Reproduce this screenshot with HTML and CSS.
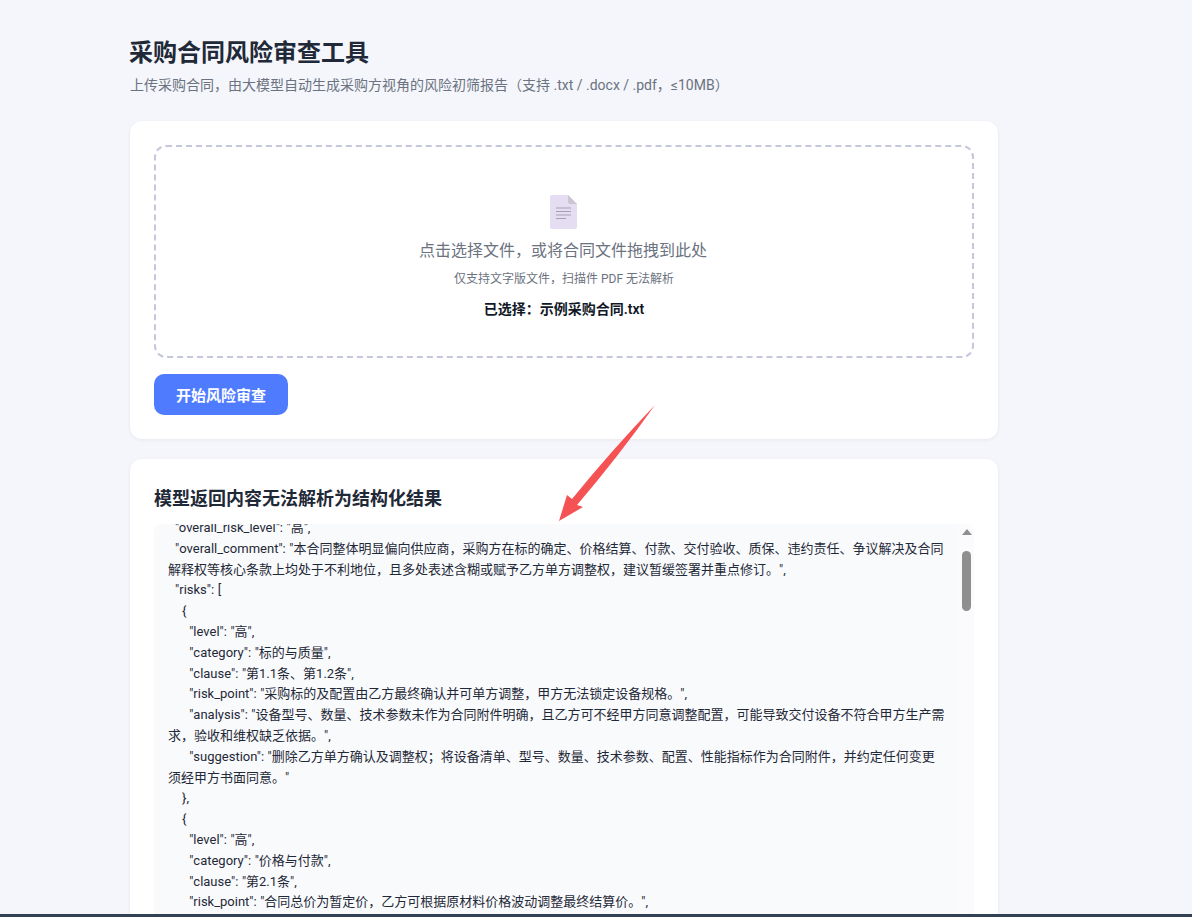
FILE: index.html
```html
<!DOCTYPE html>
<html lang="zh-CN">
  <head>
    <meta charset="UTF-8" />
    <title>采购合同风险审查工具</title>
    <link rel="stylesheet" href="styles.css">
  </head>
  <body>
    <div class="container">
      <h1>采购合同风险审查工具</h1>
      <p class="subtitle">上传采购合同，由大模型自动生成采购方视角的风险初筛报告（支持 .txt / .docx / .pdf，≤10MB）</p>

      <div class="card">
        <div class="dropzone">
          <svg class="file-icon" width="27" height="34" viewBox="0 0 27 34">
            <path d="M2 0H18L27 9V32a2 2 0 0 1-2 2H2a2 2 0 0 1-2-2V2a2 2 0 0 1 2-2z" fill="#e5def2" />
            <path d="M18 0L27 9H20a2 2 0 0 1-2-2z" fill="#c9c6d4" />
            <path d="M6 13H21M6 16.5H21M6 20H21M6 23.5H16" stroke="#a5a1b3" stroke-width="1" fill="none" />
          </svg>
          <p class="drop-title">点击选择文件，或将合同文件拖拽到此处</p>
          <p class="drop-note">仅支持文字版文件，扫描件 PDF 无法解析</p>
          <p class="drop-file">已选择：示例采购合同.txt</p>
        </div>
        <button class="start-btn">开始风险审查</button>
      </div>

      <div class="card result-card">
        <h2>模型返回内容无法解析为结构化结果</h2>
        <div class="raw-box">
          <pre class="raw-text">  "overall_risk_level": "高",
  "overall_comment": "本合同整体明显偏向供应商，采购方在标的确定、价格结算、付款、交付验收、质保、违约责任、争议解决及合同解释权等核心条款上均处于不利地位，且多处表述含糊或赋予乙方单方调整权，建议暂缓签署并重点修订。",
  "risks": [
    {
      "level": "高",
      "category": "标的与质量",
      "clause": "第1.1条、第1.2条",
      "risk_point": "采购标的及配置由乙方最终确认并可单方调整，甲方无法锁定设备规格。",
      "analysis": "设备型号、数量、技术参数未作为合同附件明确，且乙方可不经甲方同意调整配置，可能导致交付设备不符合甲方生产需求，验收和维权缺乏依据。",
      "suggestion": "删除乙方单方确认及调整权；将设备清单、型号、数量、技术参数、配置、性能指标作为合同附件，并约定任何变更须经甲方书面同意。"
    },
    {
      "level": "高",
      "category": "价格与付款",
      "clause": "第2.1条",
      "risk_point": "合同总价为暂定价，乙方可根据原材料价格波动调整最终结算价。",</pre>
          <div class="scrollbar">
            <span class="scroll-up"></span>
            <span class="scroll-thumb"></span>
          </div>
        </div>
      </div>
    </div>

    <div class="bottom-bar"></div>

    <svg class="arrow" width="110" height="130" viewBox="0 0 110 130">
      <path d="M101 1Q64 53 23 101L29 103L5 117L13 91L18 95Q57 47 101 1z" fill="#f55353" />
    </svg>
  </body>
</html>
```

FILE: styles.css
```css
* {
  box-sizing: border-box;
  margin: 0;
}

html,
body {
  height: 100%;
  overflow: hidden;
}

body {
  background-color: #f4f6fb;
  color: #1f2937;
  font-family: Roboto, "Noto Sans CJK SC", sans-serif;
}

.container {
  width: 868px;
  margin-left: 130px;
  padding-top: 37px;
}

h1 {
  font-size: 24px;
  line-height: 30px;
  font-weight: 700;
  margin-left: -1px;
  padding-top: 1px;
}

.subtitle {
  margin-top: 7px;
  margin-bottom: 26px;
  font-size: 14px;
  line-height: 20px;
  color: #6b7280;
}

.card {
  background-color: white;
  border-radius: 12px;
  padding: 24px;
  box-shadow: 0 1px 4px rgba(15, 23, 42, 0.06);
  margin-bottom: 20px;
}

.dropzone {
  height: 213px;
  border: 2px dashed #c5c8dc;
  border-radius: 12px;
  display: flex;
  flex-flow: column;
  align-items: center;
  padding-top: 48px;
}

.file-icon {
  display: block;
  margin-left: -2px;
}

.drop-title {
  margin-top: 10px;
  font-size: 16px;
  line-height: 24px;
  color: #6b7280;
  margin-left: -2px;
}

.drop-note {
  margin-top: 7px;
  font-size: 12px;
  line-height: 18px;
  color: #6b7280;
}

.drop-file {
  margin-top: 11px;
  font-size: 14px;
  line-height: 20px;
  font-weight: 600;
  color: #111827;
}

.start-btn {
  display: block;
  margin-top: 16px;
  width: 134px;
  height: 41px;
  border: 0;
  border-radius: 10px;
  background-color: #4f7cff;
  color: white;
  font-family: inherit;
  font-size: 15px;
  font-weight: 600;
}

.result-card h2 {
  font-size: 18px;
  line-height: 26px;
  margin-top: 3px;
  font-weight: 700;
}

.result-card {
  height: 600px;
}

.raw-box {
  position: relative;
  margin-top: 12px;
  height: 420px;
  background-color: #f9fafc;
  border-radius: 8px;
  overflow: hidden;
}

.raw-text {
  width: 806px;
  margin-top: -6px;
  padding: 0 14px;
  font-family: inherit;
  font-size: 13px;
  line-height: 20.8px;
  word-spacing: 0.3px;
  white-space: pre-wrap;
  color: #1f2937;
}

.scrollbar {
  position: absolute;
  top: 0;
  right: 0;
  bottom: 0;
  width: 16px;
  background-color: #fbfbfd;
}

.scroll-up {
  position: absolute;
  top: 5px;
  left: 4px;
  border-left: 5px solid transparent;
  border-right: 5px solid transparent;
  border-bottom: 6px solid #8f8f8f;
}

.scroll-thumb {
  position: absolute;
  top: 27px;
  left: 4px;
  width: 9px;
  height: 60px;
  border-radius: 5px;
  background-color: #8f8f8f;
}

.bottom-bar {
  position: fixed;
  left: 0;
  right: 0;
  bottom: 0;
  height: 3px;
  background-color: #334155;
}

.arrow {
  position: fixed;
  left: 554px;
  top: 404px;
}
```
